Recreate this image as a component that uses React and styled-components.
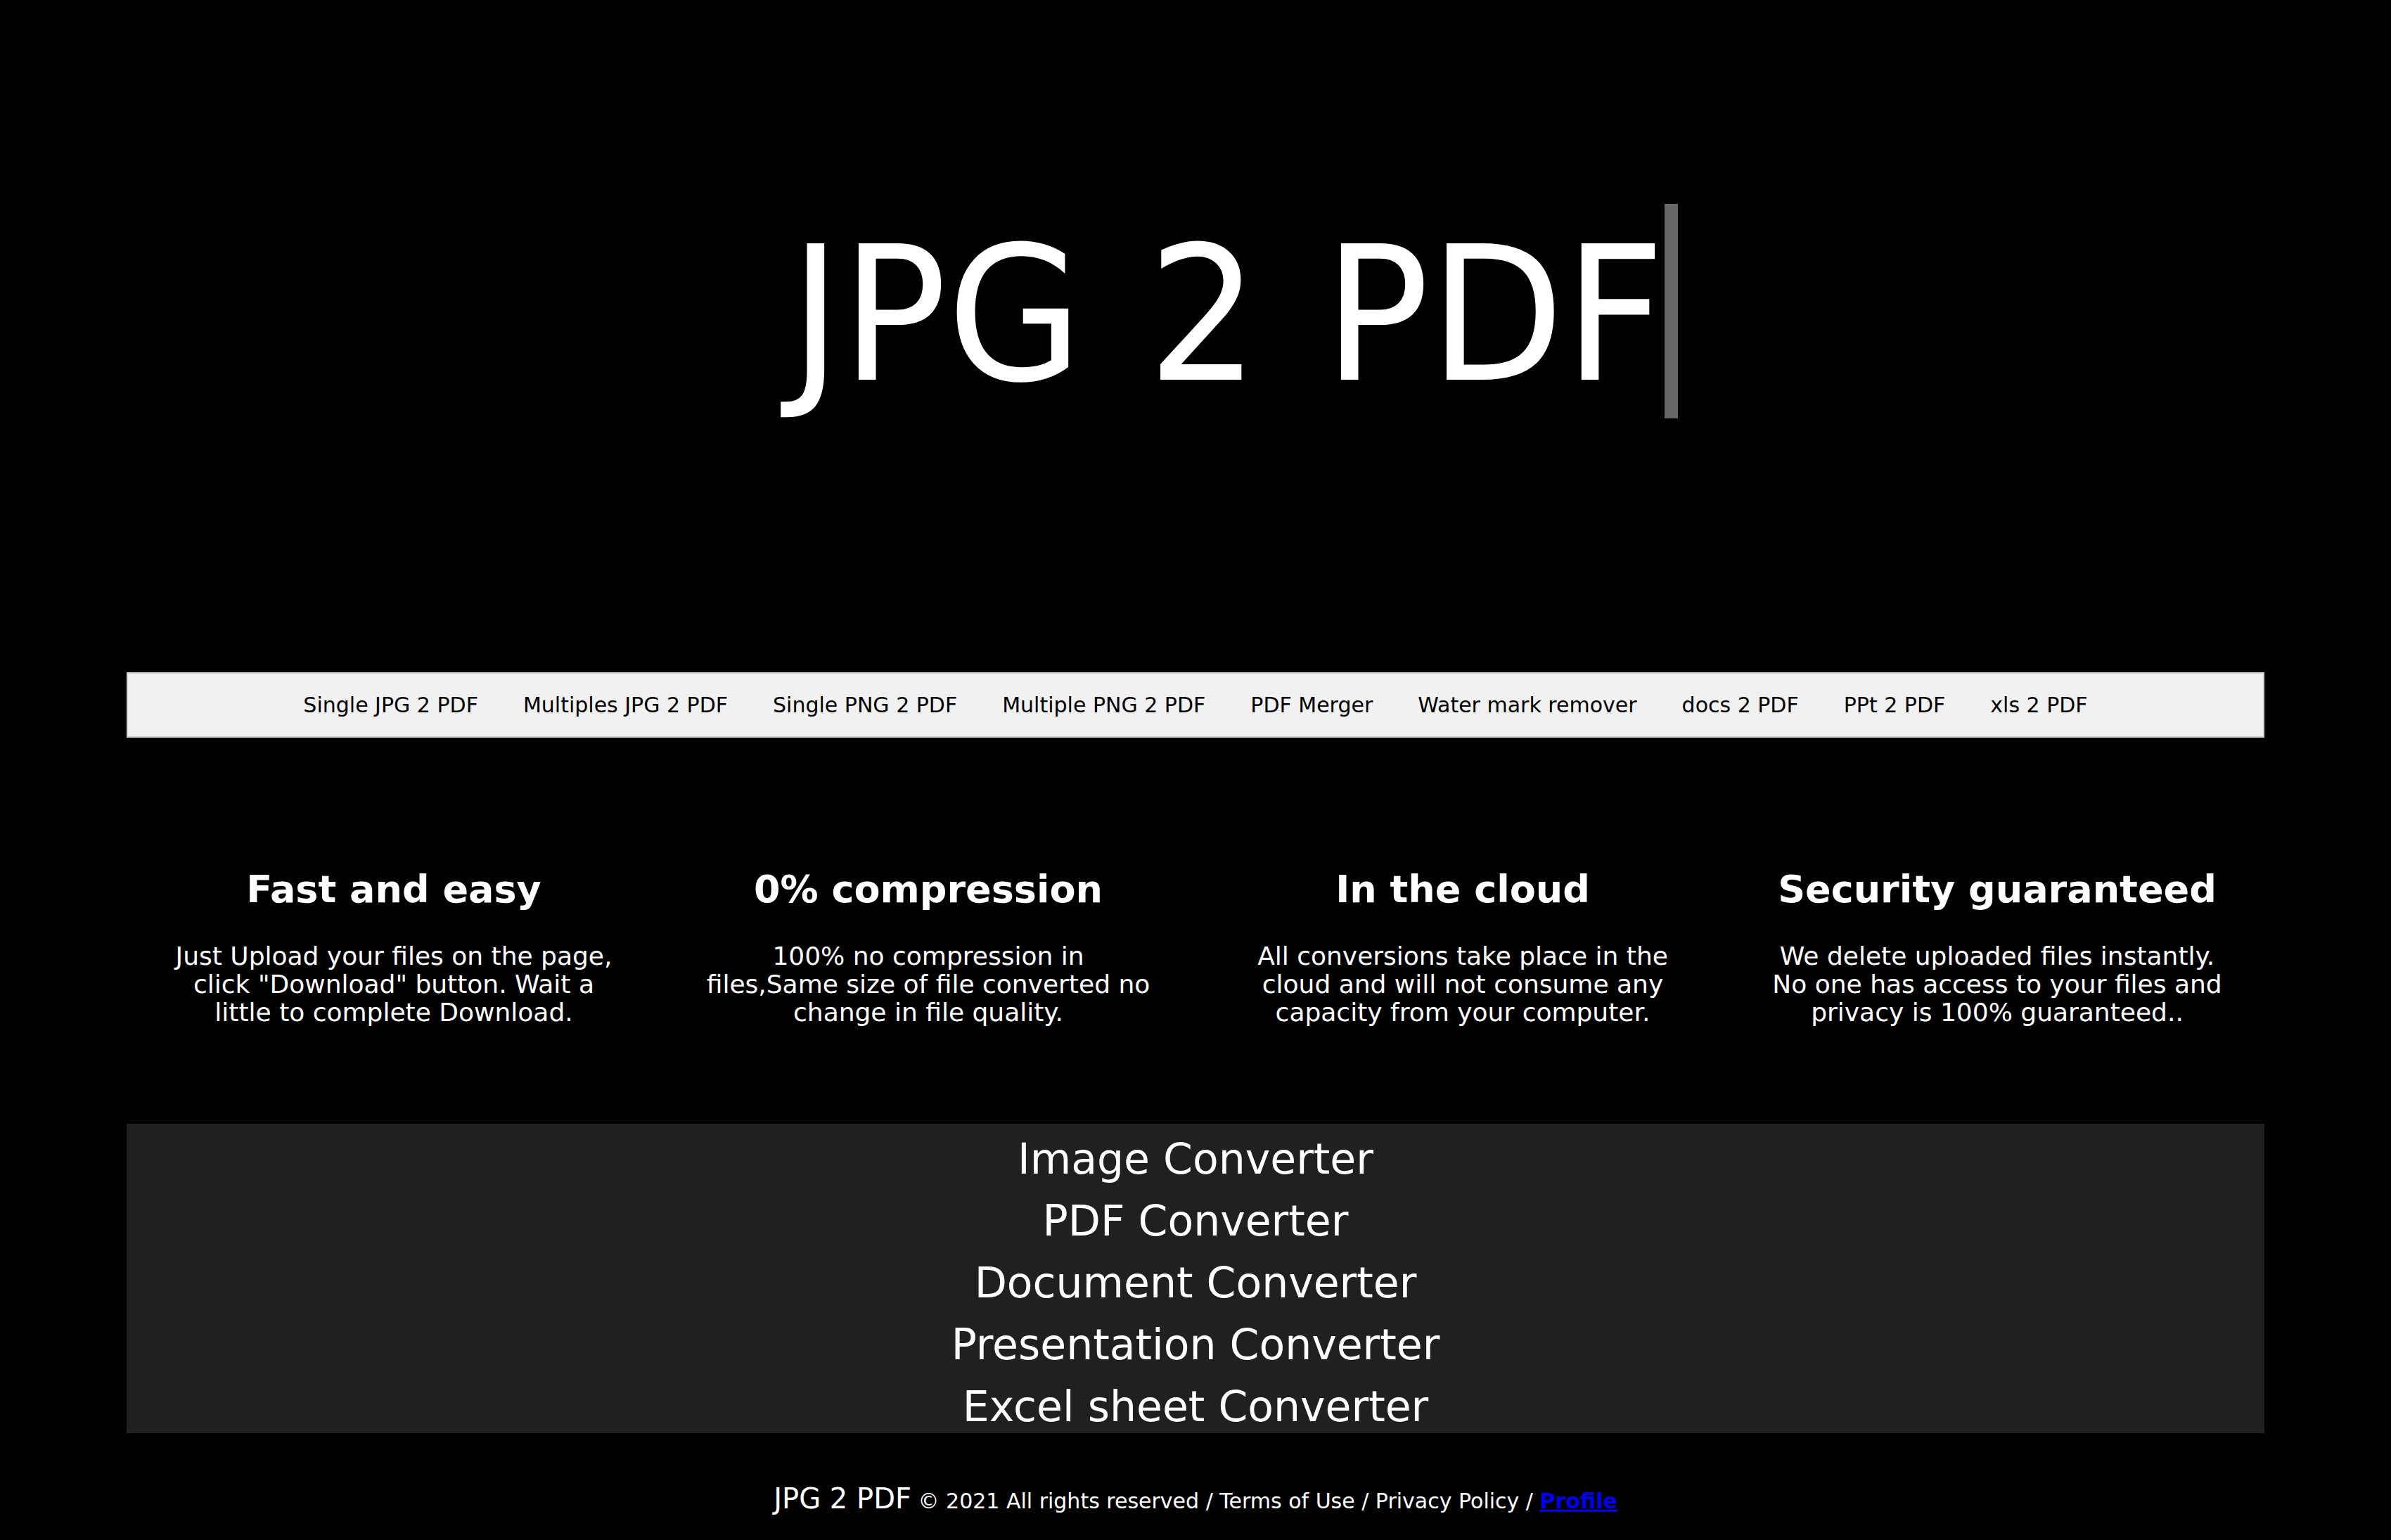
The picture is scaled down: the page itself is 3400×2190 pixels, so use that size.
import React from "react";
import styled, { createGlobalStyle } from "styled-components";

const Global = createGlobalStyle`
  html, body { margin: 0; padding: 0; background: #000; }
  body { font-family: "DejaVu Sans", "Noto Sans", sans-serif; color: #fff; }
  * { box-sizing: border-box; }
`;

const Page = styled.div`
  background: #000;
  min-height: 2190px;
  display: flex;
  flex-direction: column;
`;

const Hero = styled.header`
  display: flex;
  justify-content: center;
  align-items: flex-start;
  height: 956px;
  padding-top: 290px;
`;

const Title = styled.h1`
  margin: 0 0 0 24px;
  display: flex;
  align-items: flex-start;
  font-weight: 400;
  font-size: 266px;
  line-height: 316px;
  word-spacing: 14px;
  color: #fff;
  white-space: nowrap;
`;

const TitleText = styled.span`
  display: block;
  transform: scaleX(0.936);
  transform-origin: right center;
`;

const Caret = styled.span`
  display: block;
  width: 19px;
  height: 305px;
  background: #666;
`;

const Main = styled.main`
  padding: 0 180px;
`;

const Nav = styled.nav`
  height: 93px;
  background: #f1f1f1;
  border: 2px solid #d3d3d3;
  display: flex;
  justify-content: center;
  align-items: center;
  gap: 64px;
`;

const NavLink = styled.a`
  font-size: 30px;
  color: #000;
  text-decoration: none;
  white-space: nowrap;
`;

const Features = styled.section`
  display: grid;
  grid-template-columns: repeat(4, 1fr);
  padding: 185px 0 138px;
`;

const Feature = styled.div`
  display: flex;
  flex-direction: column;
  align-items: center;
  text-align: center;
`;

const FeatureTitle = styled.h2`
  margin: 0 0 44px;
  font-size: 54px;
  line-height: 62px;
  font-weight: 700;
  color: #fff;
`;

const FeatureText = styled.p`
  margin: 0;
  max-width: 641px;
  font-size: 36px;
  line-height: 40px;
  color: #fff;
`;

const Converters = styled.section`
  background: #202020;
  height: 440px;
  padding-top: 6px;
  display: flex;
  flex-direction: column;
  align-items: center;
`;

const ConverterItem = styled.a`
  flex: none;
  font-size: 60px;
  line-height: 88px;
  color: #fff;
  text-decoration: none;
`;

const Footer = styled.footer`
  padding: 70px 0 30px;
  text-align: center;
  color: #fff;
  font-size: 30px;
`;

const Brand = styled.span`
  font-size: 40px;
`;

const Profile = styled.a`
  font-weight: 700;
  color: #0000ee;
  text-decoration: underline;
`;

const navItems = [
  "Single JPG 2 PDF",
  "Multiples JPG 2 PDF",
  "Single PNG 2 PDF",
  "Multiple PNG 2 PDF",
  "PDF Merger",
  "Water mark remover",
  "docs 2 PDF",
  "PPt 2 PDF",
  "xls 2 PDF",
];

const features = [
  {
    title: "Fast and easy",
    text: 'Just Upload your files on the page, click "Download" button. Wait a little to complete Download.',
  },
  {
    title: "0% compression",
    text: "100% no compression in files,Same size of file converted no change in file quality.",
  },
  {
    title: "In the cloud",
    text: "All conversions take place in the cloud and will not consume any capacity from your computer.",
  },
  {
    title: "Security guaranteed",
    text: "We delete uploaded files instantly. No one has access to your files and privacy is 100% guaranteed..",
  },
];

const converters = [
  "Image Converter",
  "PDF Converter",
  "Document Converter",
  "Presentation Converter",
  "Excel sheet Converter",
];

export default function App() {
  return (
    <Page>
      <Global />
      <Hero>
        <Title>
          <TitleText>JPG 2 PDF</TitleText>
          <Caret />
        </Title>
      </Hero>
      <Main>
        <Nav>
          {navItems.map((n) => (
            <NavLink key={n} href="#">
              {n}
            </NavLink>
          ))}
        </Nav>
        <Features>
          {features.map((f) => (
            <Feature key={f.title}>
              <FeatureTitle>{f.title}</FeatureTitle>
              <FeatureText>{f.text}</FeatureText>
            </Feature>
          ))}
        </Features>
        <Converters>
          {converters.map((c) => (
            <ConverterItem key={c} href="#">
              {c}
            </ConverterItem>
          ))}
        </Converters>
      </Main>
      <Footer>
        <Brand>JPG 2 PDF</Brand> © 2021 All rights reserved / Terms of Use / Privacy Policy /{" "}
        <Profile href="#">Profile</Profile>
      </Footer>
    </Page>
  );
}
